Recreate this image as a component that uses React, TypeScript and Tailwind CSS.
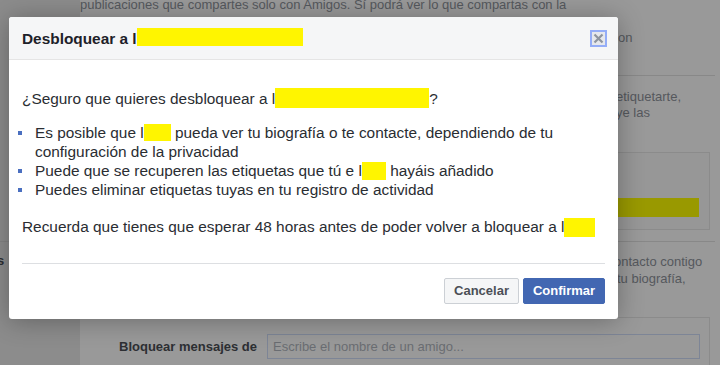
import React from "react";

const Y = ({ w, h, a }: { w: string; h: string; a: string }) => (
  <span className={`inline-block bg-[#fff500] ${w} ${h} ${a}`} />
);

export default function App() {
  return (
    <div className="relative w-[720px] h-[365px] overflow-hidden font-['Liberation_Sans',Arial,sans-serif]">
      {/* dimmed background page */}
      <div className="flex h-full">
        <div className="w-[80px] h-full bg-[#8c8c8c] flex flex-col">
          <div className="h-[242px] border-b border-[#838383]" />
          <div className="pt-[10px] -ml-[3px] text-[13px] leading-[17px] font-bold text-[#2d2f33]">s</div>
        </div>
        <div className="flex-1 h-full bg-[#999999] flex flex-col text-[13px] text-[#55585d]">
          <div className="h-[76px] border-b border-[#888888] mr-[5px]">
            <div className="-mt-[3px] leading-[16.5px]">
              <div>publicaciones que compartes solo con Amigos. Sí podrá ver lo que compartas con la</div>
              <div>configuración Público, y etiquetarte en publicaciones, fotos y comentarios de</div>
              <div className="pl-[538px]">on</div>
            </div>
          </div>
          <div className="h-[166px] border-b border-[#888888] mr-[5px] flex flex-col">
            <div className="pt-[13px] pl-[536px] leading-[16px]">
              <div>etiquetarte,</div>
              <div>ye las</div>
            </div>
            <div className="mt-[31px] ml-[40px] mr-[5px] h-[78px] border border-[#8b8b8b] bg-[#979797] pt-[45px] pr-[10px] pl-[20px]">
              <div className="h-[19px] bg-[#999900]" />
            </div>
          </div>
          <div className="h-[75px] pt-[11px] pl-[534px] leading-[17px]">
            <div>ontacto contigo</div>
            <div className="pl-[3px]">tu biografía,</div>
          </div>
          <div className="flex-1 mr-[10px] border-t border-r border-[#8b8b8b] flex items-start pt-[16px]">
            <div className="w-[177px] text-right font-bold text-[#2d2f33] leading-[25px]">Bloquear mensajes de</div>
            <div className="ml-[10px] mr-[9px] flex-1 h-[25px] border border-[#7d8596] bg-[#999999] pl-[5px] leading-[23px] text-[#6a6d72]">
              Escribe el nombre de un amigo...
            </div>
          </div>
        </div>
      </div>

      {/* dialog */}
      <div className="absolute left-[9px] top-[17px] w-[609px] h-[302px] bg-white rounded-[3px] shadow-[0_2px_26px_rgba(0,0,0,0.3)] flex flex-col text-[#2a2d32]">
        <div className="h-[43px] bg-[#f5f6f7] border-b border-[#e5e5e5] rounded-t-[3px] flex items-center justify-between pl-[13px] pr-[11px]">
          <div className="text-[15.4px] leading-[19px] font-bold text-[#1d2129]">
            Desbloquear a l<Y w="w-[166px]" h="h-[18px]" a="-my-[2px] align-[0px]" />
          </div>
          <div className="w-[17px] h-[17px] border-2 border-[#94adf7] bg-[#e6e8ec] flex items-center justify-center">
            <svg width="11" height="11" viewBox="0 0 11 11">
              <path d="M1.5 1.5 L9.5 9.5 M9.5 1.5 L1.5 9.5" stroke="#8d949e" strokeWidth="2.2" />
            </svg>
          </div>
        </div>
        <div className="flex flex-col px-[13px] pt-[29px] text-[15.4px] leading-[19px]">
          <div>
            ¿Seguro que quieres desbloquear a l<Y w="w-[154px]" h="h-[20px]" a="-my-[2px] align-[-2px]" />?
          </div>
          <ul className="mt-[15px] -ml-[4px] flex flex-col">
            <li className="flex items-start">
              <span className="mt-[8px] w-[4px] h-[4px] bg-[#4a6fc0] shrink-0" />
              <span className="ml-[13px]">
                Es posible que l<Y w="w-[27px]" h="h-[17px]" a="-my-[1px] align-[-2px]" /> pueda ver tu biografía o te contacte, dependiendo de tu configuración de la privacidad
              </span>
            </li>
            <li className="flex items-start">
              <span className="mt-[8px] w-[4px] h-[4px] bg-[#4a6fc0] shrink-0" />
              <span className="ml-[13px]">
                Puede que se recuperen las etiquetas que tú e l<Y w="w-[24px]" h="h-[18px]" a="-my-[1px] align-[-3px]" /> hayáis añadido
              </span>
            </li>
            <li className="flex items-start">
              <span className="mt-[8px] w-[4px] h-[4px] bg-[#4a6fc0] shrink-0" />
              <span className="ml-[13px]">Puedes eliminar etiquetas tuyas en tu registro de actividad</span>
            </li>
          </ul>
          <div className="mt-[18px]">
            Recuerda que tienes que esperar 48 horas antes de poder volver a bloquear a l<Y w="w-[31px]" h="h-[19px]" a="-my-[2px] align-[-3px]" />
          </div>
          <div className="mt-[27px] h-px bg-[#dddfe2]" />
        </div>
        <div className="flex justify-end gap-[4px] pr-[13px] pt-[14px]">
          <button className="w-[75px] h-[26px] rounded-[2px] border border-[#ccd0d5] bg-[#f5f6f7] text-[13px] font-bold text-[#4b4f56]">
            Cancelar
          </button>
          <button className="w-[82px] h-[26px] rounded-[2px] border border-[#4267b2] bg-[#4267b2] text-[13px] font-bold text-white">
            Confirmar
          </button>
        </div>
      </div>
    </div>
  );
}
